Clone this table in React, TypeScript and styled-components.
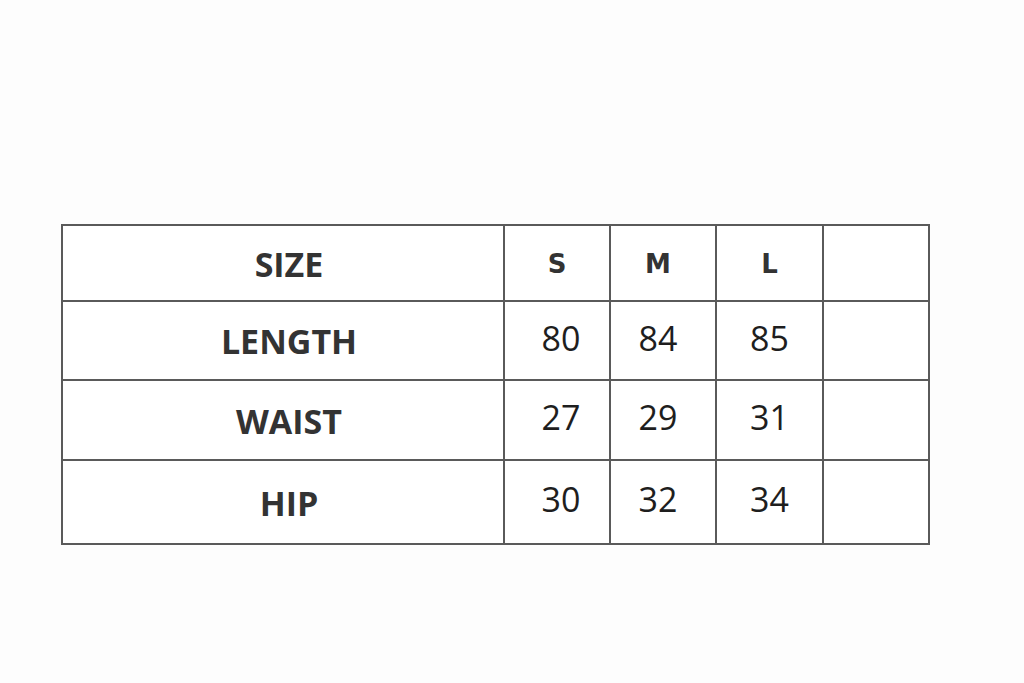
import React from 'react';
import styled, { createGlobalStyle } from 'styled-components';

const GlobalStyle = createGlobalStyle`
    html, body {
        margin: 0;
        padding: 0;
        background: #fdfdfd;
    }
`;

const Page = styled.div`
    width: 1024px;
    height: 683px;
    box-sizing: border-box;
    padding: 224px 0 0 61px;
    background: #fdfdfd;
`;

const Grid = styled.div`
    display: grid;
    grid-template-columns: 442px 106px 106px 107px 106px;
    grid-template-rows: 76px 79px 80px 84px;
    width: max-content;
    border-top: 2px solid #5a5a5a;
    border-left: 2px solid #5a5a5a;
    background: #fff;
`;

const Cell = styled.div<{ $kind: 'label' | 'size' | 'value'; $shift?: number }>`
    display: flex;
    align-items: center;
    justify-content: center;
    border-right: 2px solid #5a5a5a;
    border-bottom: 2px solid #5a5a5a;
    font-family: ${(p) => (p.$kind === 'size' ? '"DejaVu Sans"' : '"Open Sans"')}, sans-serif;
    font-weight: ${(p) => (p.$kind === 'value' ? 400 : 700)};
    font-size: ${(p) => (p.$kind === 'size' ? '26px' : p.$kind === 'label' ? '34px' : '34px')};
    color: ${(p) => (p.$kind === 'value' ? '#1e1e1e' : '#333')};
    padding-left: ${(p) => (p.$kind === 'label' ? 12 : Math.max(0, (p.$shift ?? 0) * 2))}px;
    padding-right: ${(p) => Math.max(0, -(p.$shift ?? 0) * 2)}px;
    padding-top: ${(p) => (p.$kind === 'value' ? 0 : 1)}px;
    padding-bottom: ${(p) => (p.$kind === 'value' ? 6 : 0)}px;
`;

const shifts = [4, -5, 0, 0];

const rows = [
    { label: 'LENGTH', values: ['80', '84', '85', ''] },
    { label: 'WAIST', values: ['27', '29', '31', ''] },
    { label: 'HIP', values: ['30', '32', '34', ''] },
];

export default function App() {
    return (
        <Page>
            <GlobalStyle />
            <Grid>
                <Cell $kind="label">SIZE</Cell>
                {['S', 'M', 'L', ''].map((s, i) => (
                    <Cell key={i} $kind="size" $shift={i === 1 ? -5 : 0}>{s}</Cell>
                ))}
                {rows.map((r) => (
                    <React.Fragment key={r.label}>
                        <Cell $kind="label">{r.label}</Cell>
                        {r.values.map((v, i) => (
                            <Cell key={i} $kind="value" $shift={shifts[i]}>{v}</Cell>
                        ))}
                    </React.Fragment>
                ))}
            </Grid>
        </Page>
    );
}
